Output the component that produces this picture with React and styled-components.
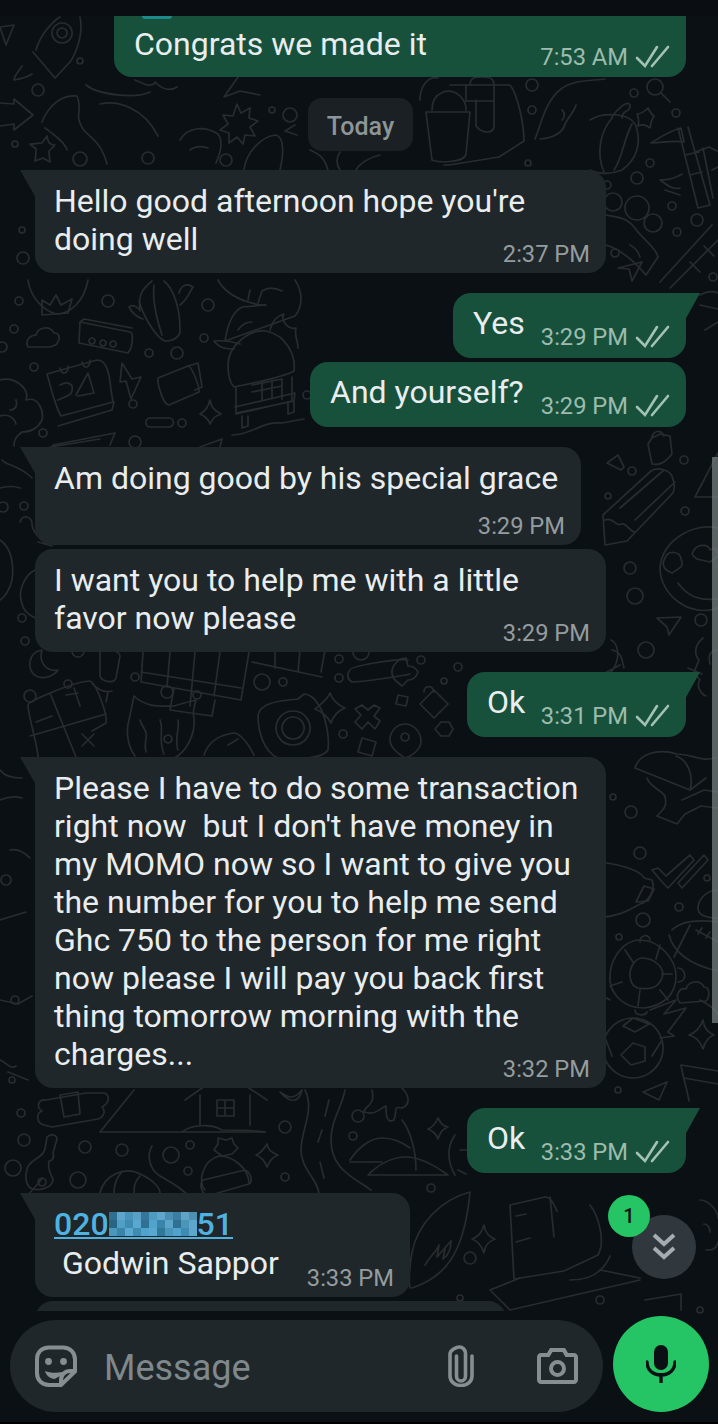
import React from "react";
import styled, { createGlobalStyle } from "styled-components";

const GlobalStyle = createGlobalStyle`
  html, body {
    margin: 0;
    padding: 0;
    background: #0b1014;
    font-family: Roboto, "Noto Sans", sans-serif;
  }
`;

const Page = styled.div`
  position: relative;
  width: 718px;
  height: 1424px;
  overflow: hidden;
  background: #0b1014;
  display: flex;
  flex-direction: column;
`;

const Wallpaper = styled.svg`
  position: absolute;
  left: 0;
  top: 0;
  fill: none;
  stroke: #282c2f;
  stroke-width: 1.7;
  stroke-linecap: round;
  stroke-linejoin: round;
`;

const StatusStrip = styled.div`
  position: relative;
  height: 16px;
  flex: none;
  background: #0a0e12;
`;

const Thread = styled.div`
  position: relative;
  height: 1295px;
  flex: none;
  overflow: hidden;
  display: flex;
  flex-direction: column;
  padding: 0 32px 0 35px;
`;

const Bubble = styled.div`
  position: relative;
  flex: none;
  box-sizing: border-box;
  align-self: ${(p) => (p.$out ? "flex-end" : "flex-start")};
  width: ${(p) => p.$w}px;
  height: ${(p) => p.$h}px;
  margin-top: ${(p) => p.$top || 0}px;
  padding: ${(p) => (p.$out ? "11px 16px 0 20px" : "12px 16px 0 19px")};
  background: ${(p) => (p.$out ? "#17513c" : "#1f272a")};
  border-radius: ${(p) => (p.$flat ? "0 0 18px 18px" : "18px")};
  display: grid;
  grid-template-rows: auto 1fr;
  ${(p) => p.$tail && !p.$out && `
    border-top-left-radius: 0;
    &::before {
      content: "";
      position: absolute;
      left: -15px;
      top: 0;
      width: 24px;
      height: 26px;
      background: #1f272a;
      clip-path: polygon(0 0, 100% 0, 100% 100%, 62% 100%);
    }
  `}
  ${(p) => p.$tail && p.$out && `
    border-top-right-radius: 0;
    &::before {
      content: "";
      position: absolute;
      right: -14px;
      top: 0;
      width: 24px;
      height: 26px;
      background: #17513c;
      clip-path: polygon(0 0, 100% 0, 40% 100%, 0 100%);
    }
  `}
`;

const BodyText = styled.div`
  position: relative;
  grid-area: 1 / 1;
  font-size: 32px;
  line-height: 38px;
  color: #e9edef;
`;

const Line = styled.span`
  display: block;
  width: fit-content;
  white-space: pre;
`;

const Meta = styled.div`
  position: relative;
  display: flex;
  align-items: center;
  gap: 7px;
  justify-self: end;
  align-self: end;
  grid-area: ${(p) => (p.$below ? "2 / 1" : "1 / 1 / 3 / 2")};
  height: 30px;
  margin-bottom: ${(p) => p.$mb || 4}px;
  font-size: 23.7px;
  white-space: nowrap;
  color: ${(p) => (p.$out ? "#9dbcae" : "#959c9f")};
`;

const DayChip = styled.div`
  flex: none;
  box-sizing: border-box;
  align-self: center;
  width: 105px;
  height: 53px;
  margin: 21px 0 19px;
  padding-top: 3px;
  border-radius: 14px;
  background: #1a2023;
  color: #8d9598;
  font-size: 25px;
  font-weight: 500;
  display: flex;
  align-items: center;
  justify-content: center;
`;

const Congrats = styled.span`
  display: block;
  margin-top: -2px;
`;

const Sliver = styled.span`
  position: absolute;
  left: 28px;
  top: 0;
  width: 30px;
  height: 3px;
  background: #1d8a8a;
  border-radius: 0 0 6px 6px;
`;

const PhoneLink = styled.div`
  display: flex;
  align-items: center;
  width: fit-content;
  box-sizing: border-box;
  height: 34px;
  padding-top: 6px;
  border-bottom: 2px solid #4fb0de;
  color: #4fb3e2;
  font-size: 32px;
  line-height: 26px;
  font-weight: 500;
`;

const Mosaic = styled.span`
  display: inline-grid;
  grid-template-columns: repeat(11, 8px);
  grid-auto-rows: 8px;
`;

const MosaicCell = styled.span`
  background: ${(p) => p.$c};
`;

const ContactName = styled.div`
  margin-top: 5px;
  font-size: 32px;
  line-height: 38px;
  color: #e9edef;
  white-space: pre;
`;

const ComposerRow = styled.div`
  position: relative;
  flex: none;
  display: flex;
  align-items: flex-end;
  gap: 10px;
  padding: 5px 9px 0 10px;
`;

const Composer = styled.div`
  box-sizing: border-box;
  width: 593px;
  height: 92px;
  border-radius: 46px;
  background: #1f272a;
  display: flex;
  align-items: center;
  padding: 0 25px 0 25px;
`;

const Placeholder = styled.div`
  flex: 1;
  margin-left: 27px;
  padding-top: 4px;
  font-size: 36px;
  color: #7f888c;
`;

const IconSlot = styled.span`
  display: flex;
  align-items: center;
  justify-content: center;
  margin-left: ${(p) => p.$gap || 0}px;
`;

const MicButton = styled.div`
  width: 96px;
  height: 96px;
  border-radius: 50%;
  background: #25c464;
  display: flex;
  align-items: center;
  justify-content: center;
`;

const ScrollFab = styled.div`
  position: absolute;
  left: 632px;
  top: 1215px;
  width: 64px;
  height: 64px;
  border-radius: 50%;
  background: #30383e;
  display: flex;
  align-items: center;
  justify-content: center;
`;

const Badge = styled.div`
  position: absolute;
  left: 608px;
  top: 1195px;
  width: 42px;
  height: 42px;
  border-radius: 50%;
  background: #25c464;
  color: #0b1014;
  font-size: 20px;
  font-weight: 500;
  display: flex;
  align-items: center;
  justify-content: center;
`;

const ScrollThumb = styled.div`
  position: absolute;
  left: 712px;
  top: 457px;
  width: 6px;
  height: 566px;
  background: rgba(122, 130, 132, 0.72);
`;

const BottomEdge = styled.div`
  position: absolute;
  left: 0;
  right: 0;
  bottom: 0;
  height: 2px;
  background: #000;
`;

const Ticks = () => (
  <svg width="35" height="24" viewBox="0 0 35 24" fill="none" stroke="#a3c2b4" strokeWidth="2.600" strokeLinecap="round">
    <path d="M2 13l8 8L22 2" />
    <path d="M17 21L33 2" />
  </svg>
);

const StickerIcon = () => (
  <svg width="42" height="42" viewBox="0 0 42 42" fill="none" stroke="#868e92" strokeWidth="4">
    <path d="M14 2.5h14c7 0 12 5 12 12v12L26 40H14C7 40 2 35 2 28V14C2 7 7 2.500 14 2.500z" />
    <path d="M26 40v-5c0-5 4-9 9-9h5" />
    <circle cx="13.500" cy="16.500" r="3.400" fill="#868e92" stroke="none" />
    <circle cx="28.500" cy="16.500" r="3.400" fill="#868e92" stroke="none" />
    <path d="M10 26c6 2.500 16 2.500 24-1-1 3-5 5-8 6-3 .8-6 3-7 3-5-1-8-4-9-8z" fill="#868e92" stroke="none" />
  </svg>
);

const ClipIcon = () => (
  <svg width="28" height="42" viewBox="0 0 28 42" fill="none" stroke="#868e92" strokeWidth="3.600" strokeLinecap="round">
    <path d="M9.500 11v20c0 3 2 5 4.500 5s4.500-2 4.500-5V8c0-3-3-6-6-6S3 5 3 9v22c0 5.500 5 9.500 11 9.500S25 36.500 25 31V11" />
  </svg>
);

const CameraIcon = () => (
  <svg width="41" height="36" viewBox="0 0 41 36">
    <path
      fill="#868e92"
      fillRule="evenodd"
      d="M13 0h15l3 5h6c2.200 0 4 1.800 4 4v23c0 2.200-1.800 4-4 4H4c-2.200 0-4-1.800-4-4V9c0-2.200 1.800-4 4-4h6l3-5zM4 9v23h33V9H28.500l-3-5h-10l-3 5H4zm16.500 3a8.500 8.500 0 1 1 0 17 8.500 8.500 0 0 1 0-17zm0 4a4.500 4.500 0 1 0 0 9 4.500 4.500 0 0 0 0-9z"
    />
  </svg>
);

const MicIcon = () => (
  <svg width="30" height="38" viewBox="0 0 30 38" fill="#0b1014">
    <rect x="8" y="0" width="14" height="25" rx="7" />
    <path d="M1 17c0 8 6 13 14 13s14-5 14-13" fill="none" stroke="#0b1014" strokeWidth="3.400" strokeLinecap="round" />
    <rect x="13.300" y="28" width="3.400" height="10" />
  </svg>
);

const ChevronsIcon = () => (
  <svg width="24" height="28" viewBox="0 0 24 28" fill="none" stroke="#a6adb0" strokeWidth="4">
    <path d="M2 2l10 9 10-9" />
    <path d="M2 15l10 9 10-9" />
  </svg>
);

// loose circles of the wallpaper
const dots = [
  [80, 61, 3], [38, 90, 6], [15, 144, 3], [80, 159, 7], [272, 110, 3], [290, 115, 7], [148, 158, 6], [226, 160, 6],
  [532, 85, 6], [532, 110, 4], [528, 163, 3], [634, 93, 4], [676, 113, 4], [650, 163, 4], [637, 178, 6], [672, 206, 4],
  [697, 220, 6], [677, 232, 4], [615, 253, 4], [713, 277, 4], [613, 202, 9], [637, 208, 12], [653, 223, 9], [607, 185, 4],
  [22, 230, 3], [23, 258, 6], [108, 301, 6], [19, 301, 4], [208, 305, 6], [204, 338, 4], [177, 353, 6], [149, 353, 4],
  [14, 329, 4], [34, 367, 4], [133, 404, 4], [182, 423, 4], [43, 433, 4], [2, 347, 5], [135, 442, 6], [307, 395, 4],
  [24, 506, 4], [22, 618, 4], [25, 641, 4], [3, 507, 5], [78, 651, 6], [30, 696, 6], [68, 684, 4], [167, 692, 6], [197, 695, 4],
  [135, 677, 4], [262, 682, 8], [283, 682, 4], [339, 659, 4], [361, 652, 8], [339, 678, 4], [421, 660, 4], [458, 667, 4], [444, 681, 3],
  [343, 734, 4], [632, 471, 4], [684, 460, 4], [608, 496, 3], [685, 511, 4], [630, 568, 6], [635, 596, 8], [646, 650, 8], [701, 620, 6],
  [631, 812, 6], [613, 797, 3], [640, 853, 6], [707, 878, 3], [679, 907, 4], [643, 920, 7], [619, 937, 3], [618, 1090, 3],
  [21, 1113, 4], [24, 1140, 6], [85, 1147, 6], [122, 1150, 6], [190, 1145, 4], [171, 1155, 8], [188, 1171, 4], [285, 1177, 4],
  [78, 1180, 8], [13, 1168, 8], [285, 1127, 6], [358, 1116, 6], [353, 1136, 4], [431, 1188, 4], [470, 1258, 6], [460, 1298, 3],
  [490, 1305, 3], [600, 1300, 4], [680, 1265, 3], [700, 1310, 3], [622, 680, 3], [6, 880, 5], [15, 1000, 4], [12, 1080, 3],
];

// outlines of the wallpaper drawings, in page coordinates
const doodles = [
  // rocket, top left
  "M36 50C40 35 52 22 60 17M80 17C84 35 75 55 70 62L55 78L33 52", "M22 66c-4 6-8 10-8 14 6-1 12-2 18-6",
  "M0 27l14 -2-8 20z", "M0 103l14 1 0-5 19 16-19 15v-6l-14 2", "M62 23a10 10 0 1 0 .1 0M62 28a5 5 0 1 0 .1 0",
  "M42 143l5-7c1 7 3 9 8 9l-6 6c0 5 1 8 1 11l-7-4-8 3c1-5 1-8 1-12l-6-5c5 0 9-1 12-1z",
  // legs under the first bubble
  "M42 122c8-20 22-27 35-26 5 12 0 18 2 24 4 18 20 14 28 44", "M100 104c18-4 44 4 58 32", "M86 85c12 10 50 14 64 7",
  "M45 128c8 6 20 14 22 22", "M135 80c8 3 14 8 20 3", "M238 77l-14 20 16-6 20 4", "M155 82c8 8 16 9 22 5",
  // starburst and the foot
  "M237 104l4 9 9-5-1 10 9 3-8 6 5 9-10-1-2 9-6-7-8 6v-10l-9-3 8-6-5-9 10 1z",
  "M180 140c8-14 26-14 38-6 6 8 2 20-2 29M190 150c5-4 12-4 18-2", "M244 170c2-18 18-34 32-35 8 2 8 18 4 35",
  "M310 150c8 4 14 6 18 20M380 155c-10 2-20 8-24 15M340 152c-4 6-4 12 0 18", "M297 135l-12-4 10-6",
  // pot, overalls, fish
  "M426 112h44l-4 42c-2 10-30 8-34 6z", "M432 110c0-18 18-24 28-14 6 6 6 10 6 14", "M420 100c0-14 8-24 18-22",
  "M450 85h60c8 10 14 40 14 56l-25 16-50 8h-5", "M466 85v16h28v-16M476 100v26c6 8 18 8 18 0v-26", "M470 85c0-8 6-8 12-8s12 0 12 8",
  "M535 139c6-14 10-38 26-50 14-10 30-8 44-10M540 139c8 0 20-4 24-12 2-8 10-14 12-22", "M562 110c3 2 3 8 0 10",
  // lantern and star
  "M590 120c12-8 40-8 46 6 6 18 0 34-14 44-12 5-24 4-32 0", "M612 118c-12 14-16 36-8 54M632 124c-8 14-10 36-18 46", "M612 118c0-4 8-10 10-12 8-6 10 0 6 4-2 2-6 2-6 8",
  "M648 108c2 4 3 6 6 8-2 3-3 5-4 12-3-3-8-4-12-2 1-4 1-8-1-12 4 0 7-2 11-6z", "M661 93l9 9", "M647 87a8 8 0 1 0 16 0a8 8 0 1 0-16 0",
  // bamboo
  "M651 143c8-5 18-12 30-15l3 14c-8-2-16 0-33 1z", "M678 128l20 80 12-3-22-78", "M685 155l14-3M690 175l12-3",
  "M660 180c8 0 16-2 22-6M660 180c8 6 14 10 20 8M680 195l-15 -5", "M695 152l14-5 8 4M703 148l10 50M712 170l6-3",
  // banana and plane, right of the first left bubble
  "M606 215c10 2 20 2 28 12 8 12 22 20 24 30l-12 18c-12-14-26-26-40-30", "M630 245c4 2 8 6 10 12", "M618 268l24-6-10 19-3-12z",
  "M660 282L712 225M670 288L718 240M690 262l10 10M704 246l10 10", "M700 295c8-4 14-4 18-2M700 305l18 4M705 330l13-8",
  // bowl, cloud, dots box, cactus
  "M28 280c2 16 14 30 28 34 14 0 28-12 32-34", "M42 300l8 5 6-10 5 10 11-6-4 14-26 2z",
  "M28 347c-4-8 4-12 8-12 2-8 14-10 18-2 6 0 6 6 4 8 0 4-6 6-10 6z",
  "M80 322l50 10c4 0 2 12 1 16l-3 5-49-10z M80 322l4-3 48 9", "M92 338a3 3 0 1 0 .1 0M103 340a3 3 0 1 0 .1 0M113 341a3 3 0 1 0 .1 0",
  "M165 341c-10-4-22-26-26-40M165 341c8 0 16-4 15-12 0-20-6-40-16-48M152 281c-10 8-14 14-12 30M154 285c-2 18 4 38 8 50M180 305c8-6 10-14 13-18-6-4-12-2-14 6M140 310c-4-4-8-6-11-3 3 6 8 10 14 12",
  // fox tail
  "M218 280c6 12 18 18 30 22 8 2 12 4 18 3l-24 2c-8 4-14 14-17 34l70-25c8-10 8-24 0-36", "M238 330c4-6 10-8 14-8M248 300l2-10M258 303l4-12c6-4 12-4 20 0",
  // calendar, bolt, film roll
  "M47 374l50-14c8 0 12 8 14 30l2 12-52 14c-6-10-10-28-14-42z", "M60 368a4 6 0 1 0 8-2M82 362a4 6 0 1 0 8-2", "M58 426l54-16 2-8",
  "M58 400c8-4 16-4 14-14-4-6-10-2-12-1M76 395l12-22 6 20-16 3", "M122 363l10 16 9-2-10 22-5-18-6 1z", "M158 378l30-12c4 0 12 22 11 26l-30 13c-6 0-12-22-11-27z", "M188 366l10-3 4 24-7 3",
  "M210 400c1 6 3 10 11 14-6 2-8 4-11 10-2-6-6-8-10-10 5-3 8-6 10-14z", "M146 423a4 4 0 0 1 4-5h19a4 4 0 0 1 0 9h-19a4 4 0 0 1-4-4z",
  // hut
  "M228 365c0-20 22-36 38-34 20 4 30 24 28 40-10 6-40 12-60 16-4-4-6-12-6-22z", "M236 388v26l56-13v-24M236 413l58-12 1-8-60 14",
  "M242 416v12l6-2v-10M288 402v12l6-2v-10M232 435c20 0 30-14 50-12l22-4", "M252 385l30-6v20M262 382v18M272 380v18M252 392l30-6",
  "M240 344c-6-2-14-4-26-3 6 8 14 8 20 8M270 330c2-8 6-14 14-16-4 6 4 16 12 14-2 8 2 12 2 20",
  // flower bottom left of it
  "M0 380c14-4 30 8 26 20 12-4 18 10 16 20-4 8-10 12-20 12-8 6-8 10-8 14", "M0 416c6-2 14 0 16 8", "M10 410c6 0 8-6 6-10",
  "M50 447l50-8M110 445l5-12-62 12", "M200 447l22-8-2 8", "M2 460c4 6 16 4 30 18M0 488c10-2 14-2 20 0",
  // chili and left column
  "M20 522c2-8 12-6 12 2 0 6 8 18 20 22l-14-4M0 540c12 8 14 26 12 40-2 8-6 16-12 20", "M35 570c-12 6-16 22-14 30 2 10 6 14 14 18",
  // moon, mic, crossword
  "M42 650c-14 2-16 20-6 26 8 4 18 0 22-6-10 2-20-6-16-20z", "M100 652c2-4 20-2 20 4l-4 22c-2 6-14 4-16-2z", "M92 683c4 6 12 10 20 8M108 692l-2 10",
  "M143 652l-2 30 100 18 8-48M170 652l-3 35M195 652l-5 54M220 652l-6 44M141 672l100 16M215 700l-3 16-42-6 4-22",
  "M275 650v18M300 650l-2 22M252 662l70 15M325 650l-4 22",
  // calculator and cat
  "M28 705c0-4 48-24 62-24 6 2 18 34 16 42l-14 8M28 705c0 10 10 42 10 52M50 693l26 64M30 736l76-22M36 722l16-6M74 688l6 18M66 695l12-2M82 734l12 12M94 734l-12 12",
  "M134 696c12 12 28 10 40 10 6-2 14-4 22-6-2 8-4 12-2 18 2 18-10 36-20 40M134 696l-5 24c-4 14 0 28 6 36", "M140 720c2 8 8 10 6 18 0 4-2 6 0 14M160 720c4 10-2 20 4 34M178 720c2 8-4 20 0 30M168 735a4 4 0 1 0 .1 0",
  "M204 755c4-12 14-20 30-22 4 0 12 6 20 22M228 745l10-6",
  // camera, rhomb, cross, lock, pin
  "M258 715c2-10 14-14 40-16l6-5c6 0 12 6 14 10 6 8 12 30 10 46-4 8-30 10-50 8-14-6-20-26-20-43z", "M293 711a17 17 0 1 0 .1 0M293 717a11 11 0 1 0 .1 0",
  "M330 693c2 6 8 12 15 15-6 2-12 8-14 15-3-6-10-12-16-14 5-4 13-10 15-16z", "M362 705l6 5 6-5 6 3-6 8 6 5-5 8-7-7-6 7-7-7 6-7-6-6z", "M398 695l10 2-2 9-10-2z",
  "M420 704l14-14 14 14-14 14zM424 692c0-6 8-8 10 0", "M435 729l6-7h8l4 7-4 7h-8z", "M390 740c0-10 8-16 15-16s16 6 16 18c0 6-8 14-16 16-6-4-15-10-15-18z M405 733a4 4 0 1 0 .1 0",
  "M362 738l14 4-4 14-14-4z", "M350 670c0-4 50-12 58-10M350 670c-4 4-2 10 2 12 10 0 50-6 58-8", "M395 664a12 12 0 0 0 0 16l7 6 6-6c4 0 8-2 10-8-2-4-6-6-10-6l-2-8-6 1z",
  // right column: triangle, lock, pencil, smiley
  "M618 455l6 12-3 3-14-7z", "M695 497l23-44M695 497h23", "M648 444l4-6 8-4 10 2 2 18c-6 8-12 12-20 10z", "M652 438c0-6 8-10 12-2",
  "M605 545l-2-30 48-44c6-4 20-2 22 8 2 6 2 12-2 16l-44 46zM605 520c8-4 12 8 16 4 6-2 8 8 14 8M620 508l44-38M635 520l40-38",
  "M718 528c-24-6-56 12-58 40 0 26 28 50 58 40", "M665 558c3-8 15-7 16 1 3 8 0 8-9 14-10-4-10-10-7-15zM693 552c3-8 15-9 17-2 6-4 8 0 8 6l-8 6-13-3c-4-3-6-5-4-7z", "M678 583c10 14 22 18 40 16",
  "M657 618l24-1-12 18-2-8z", "M611 640c8 4 10 20 0 32M612 650c10 2 10 10 12 18M620 665l-15 8", "M703 638c-10 8-8 18-4 22l-5 12 6 8c-4 4 0 14 6 16M718 650c-8 0-10 6-8 14", "M688 668l14 6",
  // hat, ticks, football, fish
  "M635 768c4-14 22-20 42-14 14 0 24 8 38 4M635 768l55 22c4-14-2-30-14-34", "M647 778c2 8 14 12 18 18 2 10 0 12-8 20M657 816l20 8 8-10 16-8 17 2", "M690 790l16-12M682 800l22-10 14 2",
  "M658 868l8 8 24-21 4 5-26 28-4-4-12-14zM678 883l26-28 4 5-26 28z", "M590 862c30 0 52 10 54 16l8 2c4 10-4 22-12 24-8 4-20 14-50 14", "M597 893a3 3 0 1 0 .1 0M644 886l-8 16 12-1 6-12z",
  "M718 890c-12 0-20 10-20 18 0 8 10 10 20 10M672 930c10-10 30-10 46-8M669 935c4 16 20 30 49 36M690 925l-16 32M696 930l22 12M702 928l-4 6M710 932l-4 6",
  "M640 940c20 0 36 20 36 36 0 20-14 30-32 32-24 0-36-18-34-34 2-20 16-34 30-34z", "M642 958c12 0 24 10 20 20-4 10-12 12-24 10-8-2-10-14-6-22 2-4 6-8 10-8z", "M625 950l8 12M660 945l-4 14M672 974h-10M660 990l8 10M640 990l-2 16M622 982l-12 4", "M640 942c0-8 10-8 10-2M678 968c8 0 10 14 0 14M635 1010c0 6 10 6 12 2",
  "M610 1000c-6-4-14-8-20-8M680 1003c-6-8 0-16 6-14 2-8 14-10 18-2 6 0 6 10 2 14z",
  "M633 1018a30 30 0 1 0 .1 0zM633 1018l-10 8 12 6 14-8zM633 1043l-12 12 10 10 14-4 0-14zM606 1040l6 16M662 1040l-10 16", "M650 1010l26-10-12 14 22-6-18 24 6 4-14 2",
  "M703 1020c1 8 4 12 11 15-6 2-9 6-11 14-2-6-6-12-14-14 6-2 12-8 14-15z", "M643 1092l24-10-8 18z", "M681 1065l37 6M681 1065c2 12 6 24 8 36M684 1078l34 6", "M700 1000c8 4 14 8 18 14",
  // logs, house, river, hat, key
  "M46 1100l40-7 18 0c6 2 6 10-2 14 4 4 2 10-4 12l-46 8-8-2c-8-2-8-12-2-14-6-4-4-12 4-11z", "M60 1095l18-3 2 22-16 3z",
  "M100 1132h165M100 1132l34-42", "M200 1095v30M250 1095v30M185 1100l40-28 42 28", "M217 1100h17v16h-17zM225 1100v16M217 1108h17", "M182 1132c10-8 30-8 40-2 14 0 30 0 43 2",
  "M280 1092c8 6 14 8 22-2-2 10-10 16-22 2z", "M305 1090c10 20-4 40-4 60 0 20 18 30 18 45M345 1090c-4 20-14 30-14 50 0 30 24 38 40 50", "M329 1100l-4 16M322 1130l-4 12M320 1162l4 16",
  "M372 1090c4 16-8 16-8 22 12 4 16-4 22-6 0 8 0 18 8 14 4-10-2-14 8-12 10-4 6-14 0-20", "M402 1120c8 10 14 30 14 50", "M438 1118c2 4 4 8 10 9-6 2-8 6-10 12-2-6-6-8-10-10 5-2 8-6 10-11z",
  "M350 1160c8-12 20-22 32-22 10 0 20 4 28 10M350 1162h32M368 1175c10-10 24-18 38-18 14 0 28 8 42 18z", "M455 1135c-10 14-6 30 0 40M460 1150l8 0M458 1170l8 4",
  "M47 1137c4-4 10-2 10 2l-4 14c2 6-2 8-4 8-2 8 4 18 4 18 0 8-12 12-20 10-8-2-8-14-6-20 2-10 16-10 18-20z", "M42 1178a4 4 0 1 0 .1 0M28 1195l14-16",
  "M205 1190c-8-8-2-30 14-34 14 0 30 12 30 28M203 1180l42-10c6 2 8 12 4 14l-42 12c-6-4-8-12-4-16z", "M222 1156l-8-6 4-6 0-6 8 2 6-2 2 6 4 4-6 6z",
  "M267 1144c1 6 4 8 11 11-6 2-8 6-11 12-2-6-6-10-11-12 5-2 8-6 11-11z", "M100 1193c4-18 24-26 38-20 14 6 22 14 22 20M122 1172c-6 6-8 14-8 21M140 1176c-6 6-6 12-6 17", "M152 1146c-6 10-2 24 8 30 14 8 24 14 30 22",
  // left margin low
  "M0 770c4 6 14 8 22 8M0 800c10-4 16-4 22-2M10 850c8-2 14 2 20 8M0 920l26-8M0 1000l18 4 14-8M28 1080l-20-8", "M0 1060c6 2 10 10 16 6",
  // leaf, laptop, baby
  "M470 1192c-30 8-52 32-58 60-2 12-4 24-2 36M412 1288c30-10 52-30 58-96M425 1265c6-10 12-14 14-20l-2 12 14-16c0 8-2 14-8 18l2-10", "M484 1225c1 8 5 12 11 14-6 2-10 6-11 14-2-6-6-12-12-14 6-2 10-6 12-14z",
  "M510 1205l4 74 50-8 34-16c8-14 0-40-8-50M510 1205l35-8c6 0 8 6 12 14M550 1197l4 40", "M490 1290l20 20 130-30M490 1290l30-12M600 1270l40 8", "M516 1216l10-2M516 1242l14-4",
  "M570 1280c8 0 30 0 40-24M645 1300l36-6v16",
  "M700 1200c8 0 18 10 18 18M706 1250c6 0 10 0 12-8M704 1224c4 0 6 4 6 8",
];

const mosaic = [
  "#2f6f90", "#5ea6cb", "#4a93b8", "#5aa0c4", "#35779a", "#4f9ac0", "#5ea6cb", "#4a8fb3", "#3a7fa3", "#5fa3c6", "#4f8fb0",
  "#2a6484", "#4f9fc7", "#3f8cb3", "#5aa8cf", "#2f7093", "#4fa3cc", "#3a84aa", "#5aa5c9", "#2f7093", "#4a96bb", "#5ea6cb",
  "#4a97bd", "#3a84aa", "#5aa8cf", "#3f8cb3", "#4fa3cc", "#5aa8cf", "#2f7898", "#4a96bb", "#4fa3cc", "#3f8cb3", "#5ea6cb",
];

const Lines = ({ text }) => text.split("\n").map((l, i) => <Line key={i}>{l}</Line>);

const Out = ({ w, h, top, tail, text, time, flat, children }) => (
  <Bubble $out $w={w} $h={h} $top={top} $tail={tail} $flat={flat}>
    {children}
    <BodyText>{flat ? <Congrats>{text}</Congrats> : <Lines text={text} />}</BodyText>
    <Meta $out $mb={flat ? 5 : 6}>
      {time}
      <Ticks />
    </Meta>
  </Bubble>
);

const In = ({ w, h, top, tail, text, time, below }) => (
  <Bubble $w={w} $h={h} $top={top} $tail={tail}>
    <BodyText>
      <Lines text={text} />
    </BodyText>
    <Meta $below={below}>{time}</Meta>
  </Bubble>
);

export default function App() {
  return (
    <Page>
      <GlobalStyle />
      <Wallpaper width="718" height="1424" viewBox="0 0 718 1424">
        {dots.map(([x, y, r], i) => (
          <circle key={i} cx={x} cy={y} r={r} />
        ))}
        {doodles.map((d, i) => (
          <path key={i} d={d} />
        ))}
      </Wallpaper>
      <StatusStrip />
      <Thread>
        <Out w={572} h={61} flat text="Congrats we made it" time="7:53 AM">
          <Sliver />
        </Out>
        <DayChip>Today</DayChip>
        <In w={571} h={103} tail text={"Hello good afternoon hope you're\ndoing well"} time="2:37 PM" />
        <Out w={233} h={65} top={20} tail text="Yes" time="3:29 PM" />
        <Out w={376} h={65} top={4} text="And yourself?" time="3:29 PM" />
        <In w={546} h={98} top={20} tail below text="Am doing good by his special grace" time="3:29 PM" />
        <In w={571} h={103} top={4} text={"I want you to help me with a little\nfavor now please"} time="3:29 PM" />
        <Out w={219} h={65} top={20} tail text="Ok" time="3:31 PM" />
        <In
          w={571}
          h={331}
          top={20}
          tail
          text={"Please I have to do some transaction\nright now  but I don't have money in\nmy MOMO now so I want to give you\nthe number for you to help me send\nGhc 750 to the person for me right\nnow please I will pay you back first\nthing tomorrow morning with the\ncharges..."}
          time="3:32 PM"
        />
        <Out w={219} h={65} top={20} tail text="Ok" time="3:33 PM" />
        <Bubble $w={375} $h={104} $top={20} $tail>
          <BodyText>
            <PhoneLink>
              020
              <Mosaic>
                {mosaic.map((c, i) => (
                  <MosaicCell key={i} $c={c} />
                ))}
              </Mosaic>
              51
            </PhoneLink>
            <ContactName>{" Godwin Sappor"}</ContactName>
          </BodyText>
          <Meta>3:33 PM</Meta>
        </Bubble>
        <Bubble $w={471} $h={60} $top={4} />
      </Thread>
      <ComposerRow>
        <Composer>
          <IconSlot>
            <StickerIcon />
          </IconSlot>
          <Placeholder>Message</Placeholder>
          <IconSlot>
            <ClipIcon />
          </IconSlot>
          <IconSlot $gap={62}>
            <CameraIcon />
          </IconSlot>
        </Composer>
        <MicButton>
          <MicIcon />
        </MicButton>
      </ComposerRow>
      <ScrollThumb />
      <ScrollFab>
        <ChevronsIcon />
      </ScrollFab>
      <Badge>1</Badge>
      <BottomEdge />
    </Page>
  );
}
